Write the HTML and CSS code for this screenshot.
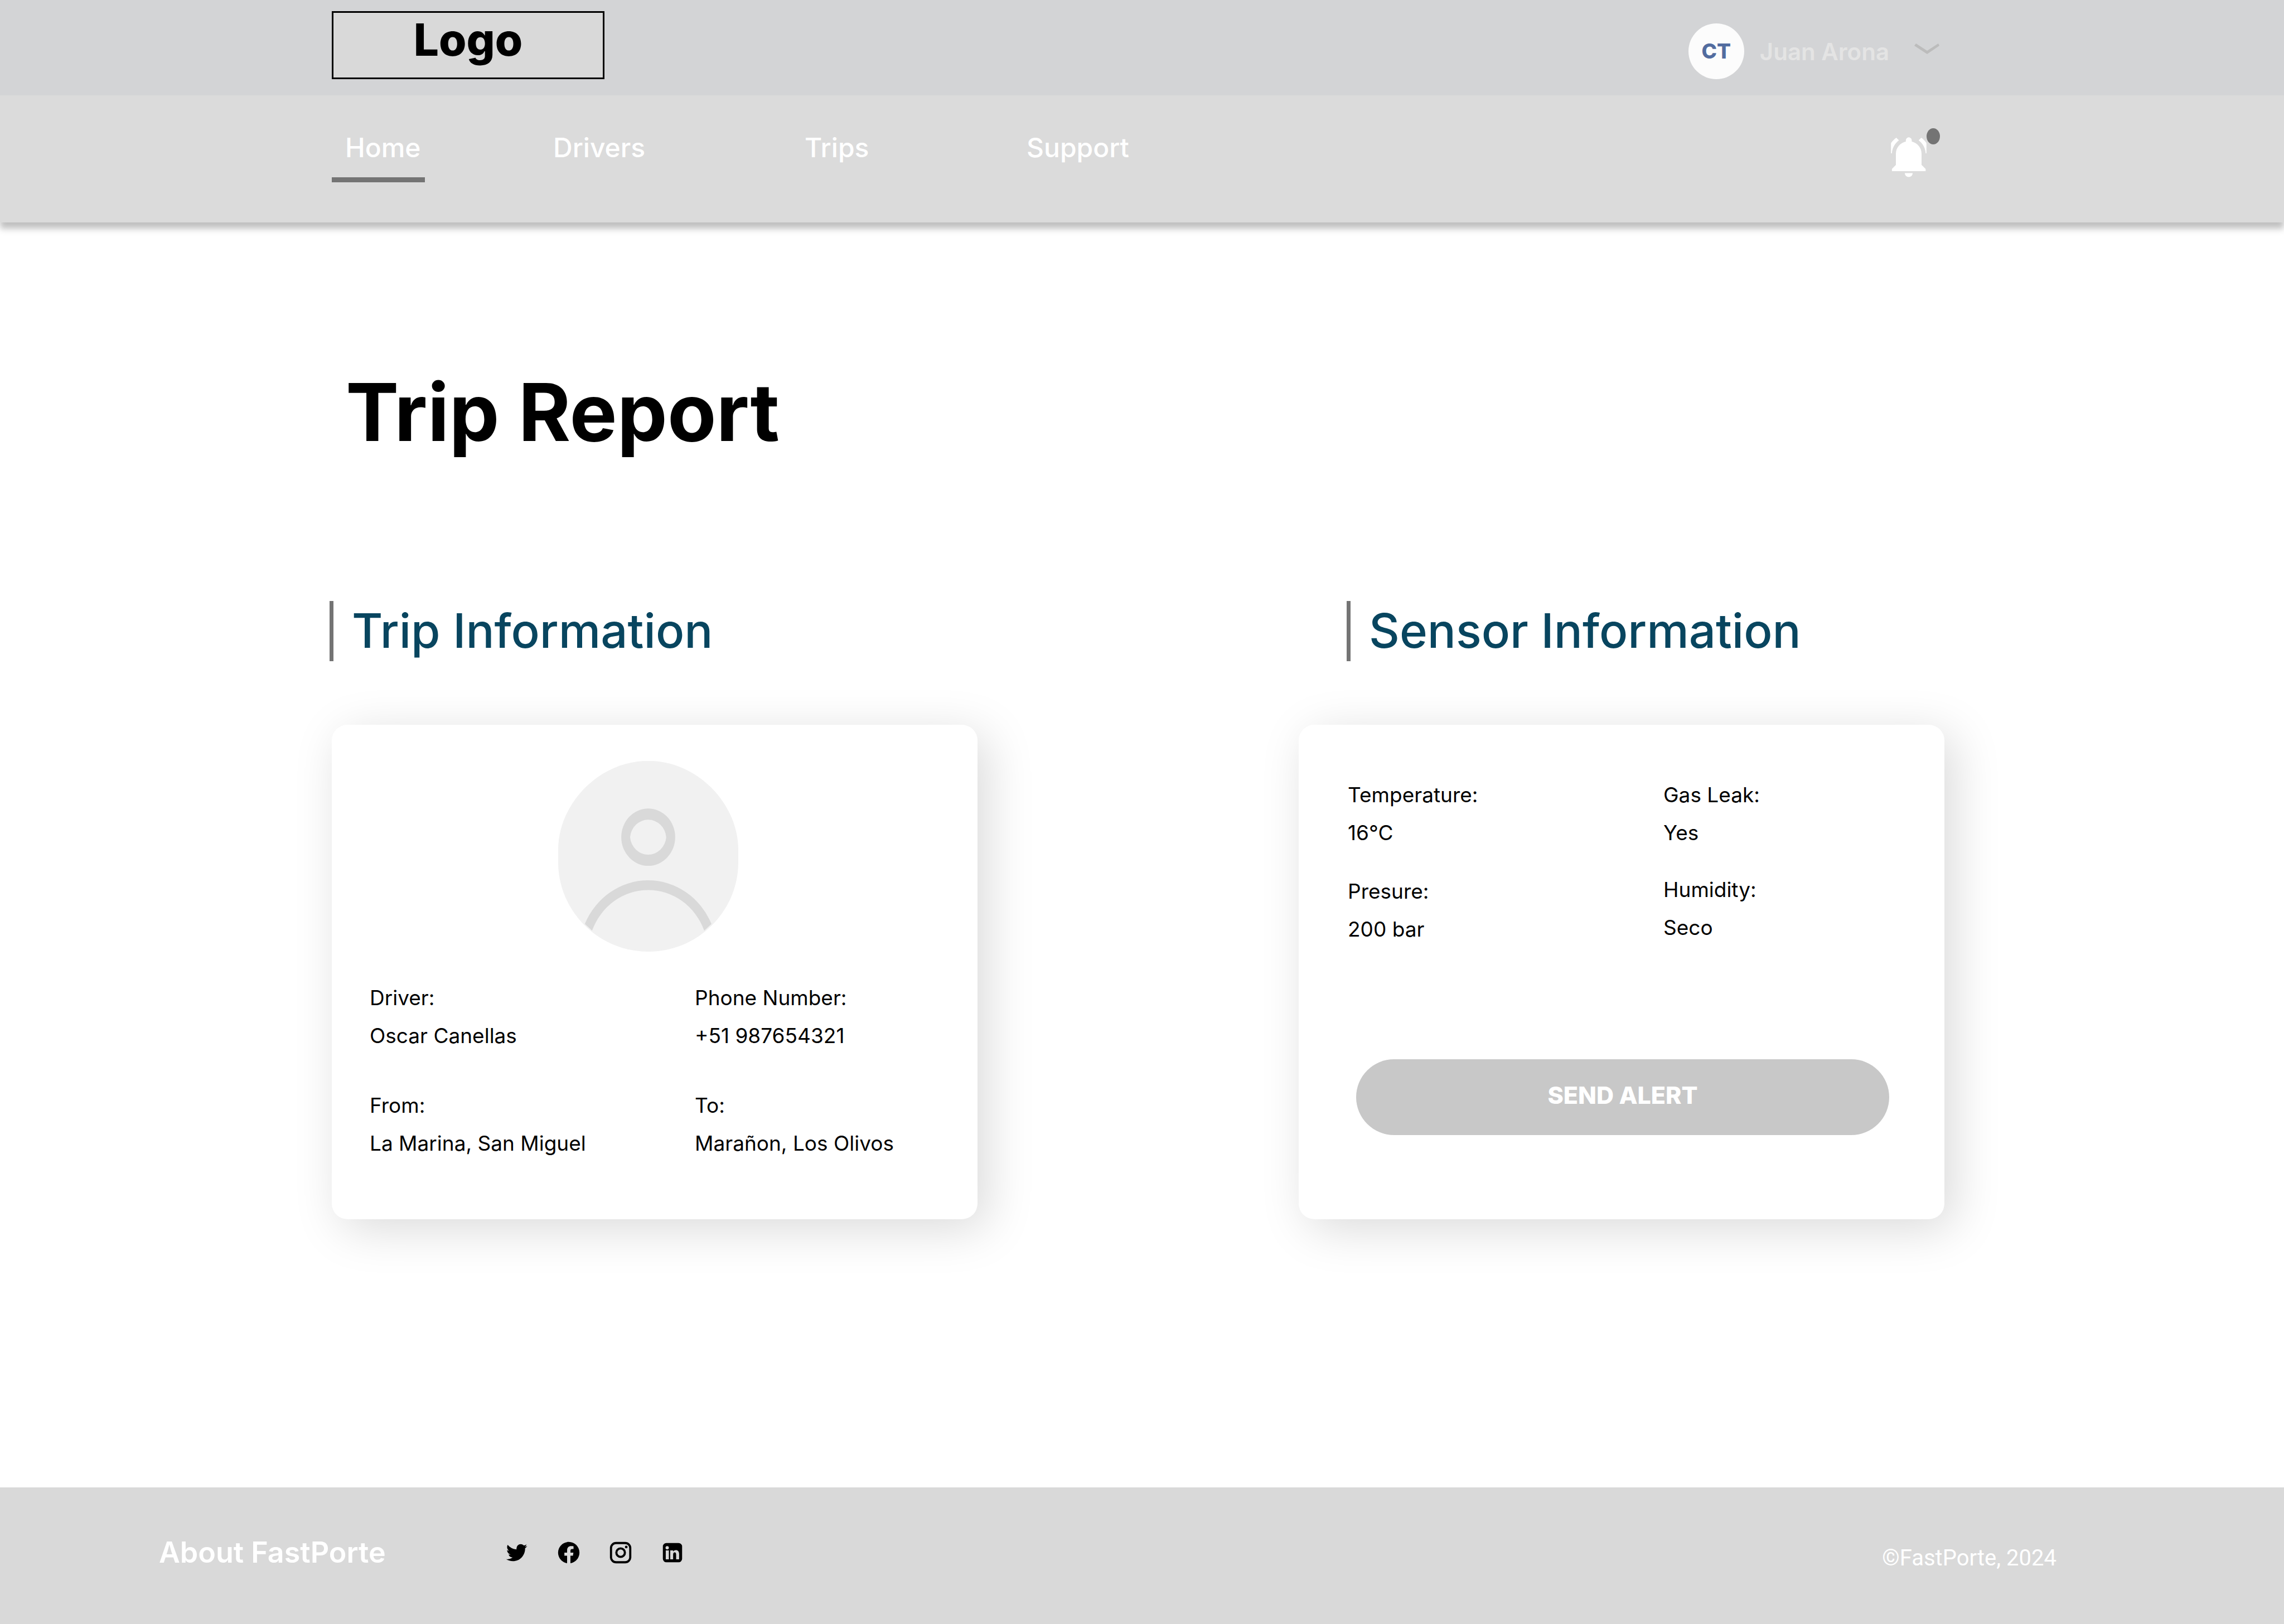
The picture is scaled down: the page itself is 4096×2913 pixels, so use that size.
FILE: index.html
```html
<!DOCTYPE html>
<html lang="en">
<head>
<meta charset="utf-8">
<title>Trip Report</title>
<link rel="stylesheet" href="styles.css">
</head>
<body>
<header class="site-header">
  <div class="topbar">
    <a class="logo" href="#">Logo</a>
    <button class="account" type="button">
      <span class="account-badge">CT</span>
      <span class="account-name">Juan Arona</span>
      <svg class="chevron" viewBox="0 0 45 19" aria-hidden="true"><path d="M3 0 23 13 43 0 45 4 23 19 0 4Z"/></svg>
    </button>
  </div>
  <div class="navbar">
    <nav class="nav">
      <a class="nav-link nav-home" href="#">Home</a>
      <a class="nav-link nav-drivers" href="#">Drivers</a>
      <a class="nav-link nav-trips" href="#">Trips</a>
      <a class="nav-link" href="#">Support</a>
    </nav>
    <button class="bell" type="button" aria-label="Notifications">
      <svg class="bell-icon" viewBox="328 140 270 302" aria-hidden="true">
        <path d="M366 349V264C366 222 395 184 441 173V163A22.500 22.500 0 0 1 486 163V173C531 184 560 222 560 264V349L591 380V396H336V380Z"/>
        <path d="M433 411H493A30 30 0 0 1 433 411Z"/>
        <path d="M369 143 389 163C357 187 338 222 336 261H329V184C340 168 353 154 369 143Z"/>
        <path d="M558 143 538 163C570 187 589 222 591 261H597V184C587 168 574 154 558 143Z"/>
      </svg>
      <span class="bell-dot"></span>
    </button>
  </div>
</header>

<main class="page">
  <h1 class="title">Trip Report</h1>
  <div class="columns">
    <section class="column">
      <h2 class="section-title">Trip Information</h2>
      <div class="card trip-card">
        <svg class="person" viewBox="134 112 1270 1344" role="img" aria-label="Driver photo">
          <path class="person-back" d="M735 112H803C1130 130 1404 420 1404 740V828C1404 1160 1130 1456 769 1456C408 1456 134 1160 134 828V740C134 420 408 130 735 112Z"/>
          <path class="person-line" fill-rule="evenodd" d="M579 649A190 202 0 0 1 959 649A190 202 0 0 1 579 649ZM641 649A128 135 0 0 0 896 649A128 135 0 0 0 641 649Z"/>
          <path class="person-line" d="M322 1261A488 516 0 0 1 1215 1261L1164 1308A424 448 0 0 0 373 1308Z"/>
        </svg>
        <div class="facts">
          <dl class="fact-list">
            <div class="fact"><dt>Driver:</dt><dd>Oscar Canellas</dd></div>
            <div class="fact"><dt>From:</dt><dd>La Marina, San Miguel</dd></div>
          </dl>
          <dl class="fact-list">
            <div class="fact"><dt>Phone Number:</dt><dd>+51 987654321</dd></div>
            <div class="fact"><dt>To:</dt><dd>Marañon, Los Olivos</dd></div>
          </dl>
        </div>
      </div>
    </section>
    <section class="column">
      <h2 class="section-title sensor-title">Sensor Information</h2>
      <div class="card sensor-card">
        <div class="facts">
          <dl class="fact-list">
            <div class="fact"><dt>Temperature:</dt><dd>16°C</dd></div>
            <div class="fact"><dt>Presure:</dt><dd>200 bar</dd></div>
          </dl>
          <dl class="fact-list fact-list-tight">
            <div class="fact"><dt>Gas Leak:</dt><dd>Yes</dd></div>
            <div class="fact"><dt>Humidity:</dt><dd>Seco</dd></div>
          </dl>
        </div>
        <button class="alert-button" type="button">SEND ALERT</button>
      </div>
    </section>
  </div>
</main>

<footer class="footer">
  <a class="about" href="#">About FastPorte</a>
  <div class="social">
    <a class="social-link" href="#" aria-label="Twitter"><svg viewBox="0 0 24 24"><path d="M19.633 7.997c.013.175.013.349.013.523 0 5.325-4.053 11.461-11.46 11.461-2.282 0-4.402-.661-6.186-1.809.324.037.636.05.973.05a8.07 8.07 0 0 0 5.001-1.721 4.036 4.036 0 0 1-3.767-2.793c.249.037.499.062.761.062.361 0 .724-.05 1.061-.137a4.027 4.027 0 0 1-3.23-3.953v-.05c.537.299 1.16.486 1.82.511a4.022 4.022 0 0 1-1.796-3.354c0-.748.199-1.434.548-2.032a11.457 11.457 0 0 0 8.306 4.215c-.062-.3-.1-.611-.1-.923a4.026 4.026 0 0 1 4.028-4.028c1.16 0 2.207.486 2.943 1.272a7.957 7.957 0 0 0 2.556-.973 4.02 4.02 0 0 1-1.771 2.22 8.073 8.073 0 0 0 2.319-.624 8.645 8.645 0 0 1-2.019 2.083z"/></svg></a>
    <a class="social-link" href="#" aria-label="Facebook"><svg viewBox="0 0 24 24"><path d="M12.001 2.002c-5.522 0-9.999 4.477-9.999 9.999 0 4.99 3.656 9.126 8.437 9.879v-6.988h-2.54v-2.891h2.54V9.798c0-2.508 1.493-3.891 3.776-3.891 1.094 0 2.24.195 2.24.195v2.459h-1.264c-1.24 0-1.628.772-1.628 1.563v1.875h2.771l-.443 2.891h-2.328v6.988C18.344 21.129 22 16.992 22 12.001c0-5.522-4.477-9.999-9.999-9.999z"/></svg></a>
    <a class="social-link" href="#" aria-label="Instagram"><svg viewBox="0 0 24 24"><g class="outline"><rect x="3" y="3" width="18" height="18" rx="4.700"/><circle cx="12" cy="12" r="4"/></g><circle cx="17.250" cy="6.750" r="1.250"/></svg></a>
    <a class="social-link" href="#" aria-label="LinkedIn"><svg viewBox="0 0 24 24"><path fill-rule="evenodd" d="M6.300 3H17.700A3.300 3.300 0 0 1 21 6.300V17.700A3.300 3.300 0 0 1 17.700 21H6.300A3.300 3.300 0 0 1 3 17.700V6.300A3.300 3.300 0 0 1 6.300 3ZM5.500 7.400A1.550 1.550 0 0 0 8.600 7.400A1.550 1.550 0 0 0 5.500 7.400ZM5.700 9.900V18.200H8.600V9.900ZM9.900 9.900V18.200H12.600V14C12.600 12.600 13.100 11.800 14 11.800C15 11.800 15.400 12.600 15.400 14V18.200H18.200V13.300C18.200 11 17 9.700 15.200 9.700C14 9.700 13.100 10.200 12.600 11V9.900Z"/></svg></a>
  </div>
  <p class="copyright">©FastPorte, 2024</p>
</footer>
</body>
</html>
```
FILE: styles.css
```css
* {
  box-sizing: border-box;
}

body {
  margin: 0;
  min-height: 100vh;
  display: flex;
  flex-direction: column;
  background: #fff;
  color: #000;
  font-family: Inter, "Liberation Sans", sans-serif;
}

h1, h2, dl, dd, p {
  margin: 0;
}

a {
  color: inherit;
  text-decoration: none;
}

button {
  padding: 0;
  border: 0;
  background: none;
  font: inherit;
}

.site-header {
  background: #dbdbdb;
  box-shadow: 0 11px 11px rgba(0, 0, 0, 0.25);
}

.topbar {
  display: flex;
  justify-content: space-between;
  align-items: flex-start;
  padding: 20px 618px 29px 595px;
  background: #d3d4d6;
}

.logo {
  width: 489px;
  height: 122px;
  border: 3px solid #000;
  background: #d9d9d9;
  font-size: 80px;
  font-weight: 800;
  line-height: 96px;
  text-align: center;
}

.account {
  display: flex;
  align-items: center;
  margin-top: 22px;
  color: #e4e4e4;
  font-size: 42px;
  font-weight: 600;
}

.account-badge {
  width: 100px;
  height: 100px;
  margin-right: 28px;
  border-radius: 50%;
  background: #fcfcfc;
  color: #526c9f;
  font-size: 37px;
  font-weight: 800;
  line-height: 100px;
}

.chevron {
  width: 45px;
  height: 19px;
  margin: 0 0 10px 45px;
  fill: #bcbcbc;
}

.navbar {
  display: flex;
  justify-content: space-between;
  align-items: flex-start;
  height: 228px;
  padding: 59px 617px 0 595px;
}

.nav {
  display: flex;
  color: #fff;
  font-size: 48px;
  font-weight: 500;
  line-height: 70px;
}

.nav-home {
  width: 167px;
  height: 97px;
  margin-right: 230px;
  padding-left: 24px;
  border-bottom: 9px solid #747474;
}

.nav-drivers {
  width: 451px;
}

.nav-trips {
  width: 398px;
}

.bell {
  position: relative;
  width: 88px;
  height: 88px;
}

.bell-icon {
  display: block;
  width: 64px;
  height: 72px;
  margin-top: 16px;
  fill: #fff;
}

.bell-dot {
  position: absolute;
  top: 0;
  right: 0;
  width: 24px;
  height: 29px;
  border-radius: 50%;
  background: #747474;
}

.page {
  flex: 1;
  padding: 254px 609px 0 591px;
}

.title {
  padding-left: 29px;
  font-size: 143px;
  font-weight: 700;
  line-height: 172px;
}

.columns {
  display: flex;
  justify-content: space-between;
  padding-top: 253px;
}

.column {
  width: 1162px;
}

.section-title {
  padding-left: 33px;
  border-left: 7px solid #747474;
  color: #08455f;
  font-size: 85px;
  font-weight: 500;
  line-height: 108px;
}

.sensor-title {
  margin-left: 90px;
}

.card {
  height: 887px;
  margin: 114px 0 0 4px;
  border-radius: 28px;
  background: #fff;
  box-shadow: 17px 17px 85px rgba(0, 0, 0, 0.15);
}

.trip-card {
  padding: 65px 68px 0;
}

.sensor-card {
  padding: 92px 88px 0;
}

.person {
  display: block;
  width: 323px;
  height: 342px;
  margin: 0 auto 49px 338px;
}

.person-back {
  fill: #f1f1f1;
}

.person-line {
  fill: #d9d9d9;
}

.facts {
  display: grid;
  grid-template-columns: 1fr 1fr;
  column-gap: 144px;
  font-size: 37px;
  line-height: 68px;
}

.sensor-card .facts {
  column-gap: 150px;
}

.fact-list {
  display: flex;
  flex-direction: column;
  gap: 57px;
}

.sensor-card .fact-list {
  gap: 37px;
}

.sensor-card .fact-list-tight {
  gap: 34px;
}

.alert-button {
  display: block;
  width: 956px;
  height: 136px;
  margin: 199px 0 0 15px;
  padding-bottom: 8px;
  border-radius: 68px;
  background: #c8c8c8;
  color: #fff;
  font-size: 43px;
  font-weight: 800;
}

.footer {
  display: flex;
  align-items: center;
  height: 245px;
  padding: 0 408px 12px 285px;
  background: #d9d9d9;
  color: #fff;
}

.about {
  width: 619px;
  font-size: 52px;
  font-weight: 600;
}

.social {
  display: flex;
  gap: 47px;
  color: #000;
}

.social-link svg {
  display: block;
  width: 46px;
  height: 46px;
  fill: currentColor;
}

.outline {
  fill: none;
  stroke: currentColor;
  stroke-width: 2;
}

.copyright {
  margin-left: auto;
  padding-top: 20px;
  font-family: Roboto, sans-serif;
  font-size: 40px;
}
```
